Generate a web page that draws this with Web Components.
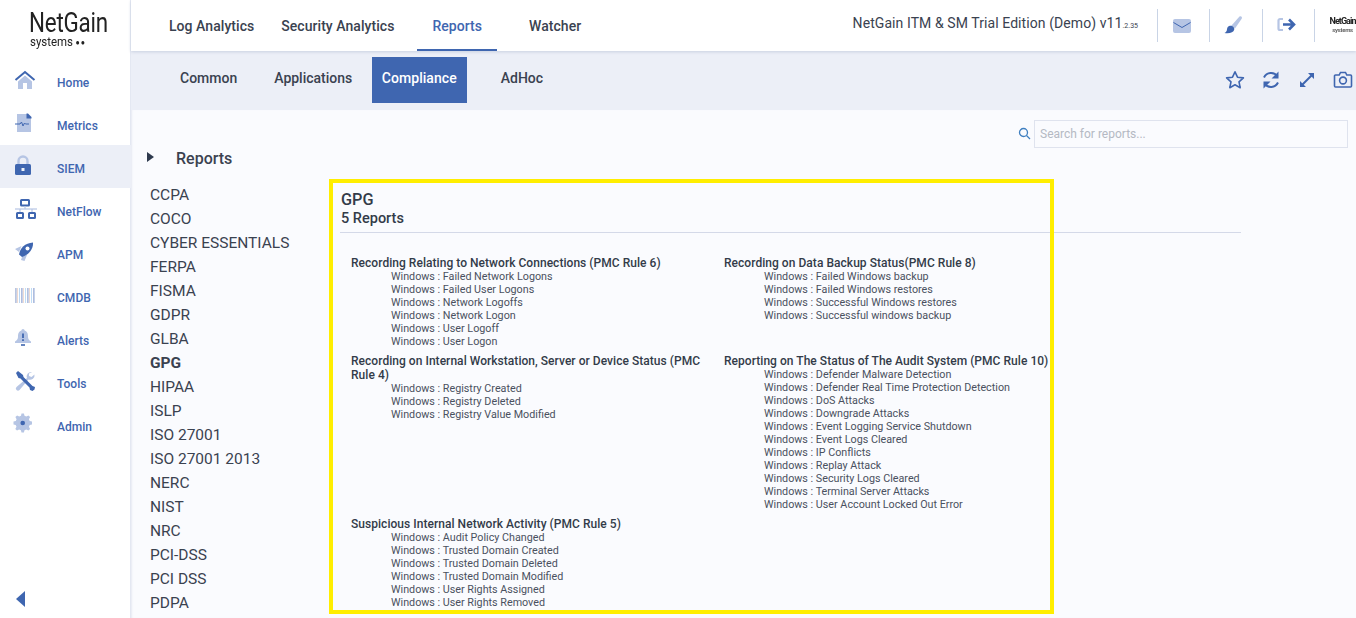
<!DOCTYPE html>
<html><head><meta charset="utf-8"><title>NetGain</title>
<style>
html,body{margin:0;padding:0;height:618px;overflow:hidden;background:#fff;font-family:Roboto,"Liberation Sans",sans-serif;}
</style></head><body>
<ng-app></ng-app>
<script>
const D='#3f66b0',L='#b6c5e4';
const ICONS={
home:`<path d="M5 13.5 12 7.5l7 6V21h-5v-6h-4v6H5z" fill="${L}"/><path d="M2.5 12 12 4l9.5 8" fill="none" stroke="${D}" stroke-width="2"/>`,
metrics:`<path d="M4 3h10l4 4v14H4z" fill="${L}"/><path d="M13.5 2.5h1.5l3.5 3.5v1.5h-5z" fill="${D}"/><path d="M2 13h5l1.5-2 1.5 4 1.5-3 1 1H16" fill="none" stroke="${D}" stroke-width="1"/>`,
lock:`<path d="M5.5 11V7a4.5 4.5 0 0 1 9 0v4" fill="none" stroke="${L}" stroke-width="2.4"/><rect x="2" y="10" width="16" height="11" rx="1.5" fill="${D}"/><rect x="8.5" y="14" width="3" height="3" fill="#eef1f8"/>`,
flow:`<g fill="none" stroke="${D}" stroke-width="2"><rect x="8" y="3" width="8" height="5.5" rx=".5"/><rect x="4" y="16" width="6" height="5" rx=".5"/><rect x="16" y="16" width="6" height="5" rx=".5"/></g><path d="M2 12h22" stroke="${L}" stroke-width="1.2"/><path d="M12 9v3M7 12v3M19 12v3" stroke="${L}" stroke-width="1.2"/>`,
rocket:`<path d="M2 9l6.500-3-2.500 6zM8 20l2-6 4 1-2.500 6z" fill="${L}"/><path d="M6 14.500C7 8 12 3 20 2.500c.5 7-5 12.500-11 14.500z" fill="${D}"/><circle cx="14.500" cy="8.500" r="2" fill="#fff"/>`,
barcode:`<g stroke-width="1">${[2,4,6,8,10,12,14,16,18,20].map((x,i)=>`<path d="M${x+.5} 5v15" stroke="${['#b9c5e0','#eed9cf','#bcd8f4','#aebce0','#efdcd4','#c1ddf6','#b2c0df','#ecd8d0','#bfdcf5','#aebde0'][i]}"/>`).join('')}<path d="M3.500 5v15M9.500 5v15M15.500 5v15M21.500 5v15" stroke="#c8d2e8"/></g>`,
bell:`<path d="M10 3a1.6 1.6 0 0 1 1.6 1.6C14.5 5.5 15 8 15 11c0 2 1.500 3.500 3 4.500V17H2v-1.500C3.500 14.500 5 13 5 11c0-3 .5-5.500 3.400-6.400A1.600 1.600 0 0 1 10 3z" fill="${L}"/><path d="M10 7.500v4.500M10 13.200v1.800" stroke="${D}" stroke-width="1.800"/><path d="M8 19h4" stroke="${D}" stroke-width="1.600"/>`,
tools:`<path d="M19 3a4.500 4.500 0 0 0-5 6L3.500 18a2 2 0 0 0 3 3L15.500 10.500a4.500 4.500 0 0 0 6-5l-3 2.500-2.500-1 0-2.500z" fill="${L}"/><path d="M3 4l2-2 5 4 .5 2 9 9 2.500 1-.5 2.500-2 1.500-2.500-1-.5-2.500-9-9-2-.5z" fill="${D}"/>`,
gear:`<path d="M11 3h2.400l.6 2.300 1.800.8 2.100-1.200 1.700 1.700-1.200 2.100.8 1.800 2.300.6v2.800l-2.300.6-.8 1.800 1.200 2.100-1.700 1.700-2.100-1.200-1.800.8-.6 2.300H11l-.6-2.300-1.800-.8-2.100 1.200-1.700-1.700 1.200-2.100-.8-1.800L3 13.900v-2.800l2.300-.6.800-1.800-1.200-2.100 1.700-1.700 2.100 1.200 1.800-.8z" fill="${L}" transform="translate(-2.500 -1.500)"/><circle cx="9.700" cy="11" r="2.300" fill="${D}"/>`,
mail:`<rect x="2" y="4" width="18" height="14" rx="2" fill="${L}"/><path d="M2.500 7.500 11 12.500l8.500-5" fill="none" stroke="${D}" stroke-width="1"/>`,
brush:`<path d="M16.500 1.500c1.800-.8 3 .7 2.200 2.200l-6.700 9.800-3.500-3z" fill="${L}"/><path d="M6.800 10.800c2.300-.6 5 1.200 4.400 3.900-.6 2.800-4.700 4.100-9.700 3.300 2-1 2.300-2.200 2.500-3.800.2-1.500 1-3 2.800-3.400z" fill="${D}"/>`,
exit:`<path d="M7 4H4a1.500 1.500 0 0 0-1.500 1.500v8A1.500 1.500 0 0 0 4 15h3" fill="none" stroke="${L}" stroke-width="2.200"/><path d="M7 9.500h11M13 4.500l5 5-5 5" fill="none" stroke="${D}" stroke-width="2.600"/>`,
star:`<path d="M10 1.800l2.500 5.400 5.900.7-4.400 4 1.200 5.800L10 14.800l-5.200 2.900L6 11.900l-4.400-4 5.900-.7z" fill="none" stroke="${D}" stroke-width="1.600" stroke-linejoin="round"/>`,
sync:`<path d="M16.500 6.500A7.800 7.800 0 0 0 3 7.500M3.500 13.500A7.800 7.800 0 0 0 17 12.500" fill="none" stroke="${D}" stroke-width="2"/><path d="M17.500 1.500v7h-7zM2.500 18.500v-7h7z" fill="${D}"/>`,
expand:`<path d="M5 15 15 5" stroke="${D}" stroke-width="2"/><path d="M11 3h6v6zM3 11v6h6z" fill="${D}"/>`,
camera:`<path d="M1.500 6a1 1 0 0 1 1-1h3.700l1.300-2.500h5L13.800 5h3.700a1 1 0 0 1 1 1v10a1 1 0 0 1-1 1h-15a1 1 0 0 1-1-1z" fill="none" stroke="${D}" stroke-width="1.600"/><circle cx="10" cy="10.500" r="3.400" fill="none" stroke="${D}" stroke-width="1.600"/>`
};
function def(name,css,html){
  customElements.define(name,class extends HTMLElement{
    connectedCallback(){
      if(this.shadowRoot)return;
      const r=this.attachShadow({mode:'open'});
      r.innerHTML=`<style>${css}</style>`+(typeof html==='function'?html(this):html);
    }
  });
}
def('ng-icon',`:host{display:block;line-height:0}svg{display:block}`,e=>{
  const s=e.getAttribute('size')||24;
  return `<svg width="${s}" height="${s}" viewBox="0 0 ${s} ${s}">${ICONS[e.getAttribute('name')]}</svg>`;
});
def('ng-logo',`:host{display:block;height:59px;color:#222}
.w{display:block;font-size:28px;line-height:26px;padding:10px 0 0 29px;transform:scaleX(.8);transform-origin:29px 0;white-space:nowrap;letter-spacing:-.3px}
.s{display:block;font-size:13px;line-height:12px;padding-left:30px;transform:scaleX(.88);transform-origin:30px 0;white-space:nowrap}
.s i{font-style:normal;font-size:8px;letter-spacing:1px;margin-left:3px;vertical-align:1px}`,
`<span class="w">NetGain</span><span class="s">systems<i>●●</i></span>`);
def('ng-nav-item',`:host{display:block;height:43px}
.r{display:flex;align-items:center;height:43px;padding-left:13px;box-sizing:border-box}
:host([active]) .r{background:#eceff7}
ng-icon{width:24px;margin-top:-2px}
span{margin-left:20px;font:500 12px Roboto,sans-serif;letter-spacing:.03px;color:#3f66b0;padding-top:5px}`,
e=>`<div class="r"><ng-icon name="${e.getAttribute('icon')}"></ng-icon><span><slot></slot></span></div>`);
def('ng-sidebar',`:host{display:flex;flex-direction:column;width:131px;flex:none;height:618px;background:#fff;box-shadow:inset -1px 0 0 #e4e8f2;box-sizing:border-box}
.grow{flex:1}
.t{width:0;height:0;border-style:solid;border-width:8px 9px 8px 0;border-color:transparent #3f66b0 transparent transparent;margin:0 0 11px 16px}`,
`<slot></slot><div class="grow"></div><div class="t"></div>`);
def('ng-top-tab',`:host{display:flex;align-items:center;height:51px;box-sizing:border-box;font:500 14px Roboto,sans-serif;letter-spacing:.05px;color:#3a4250;padding:2px 13.500px 0;border-bottom:2px solid transparent}
:host([active]){color:#3f66b0;border-bottom-color:#3f66b0;padding:2px 15px 0}`,`<slot></slot>`);
def('ng-topbar',`:host{display:flex;height:51px;flex:none;background:#fff;box-shadow:0 1px 3px #c9d0e0;position:relative;z-index:1;align-items:center;box-sizing:border-box;padding-left:24.500px}
.title{margin-left:auto;font:400 14px Roboto,sans-serif;color:#3a4250;letter-spacing:.08px;margin-right:19px;white-space:nowrap;margin-top:-6px}
small{font-size:7px;letter-spacing:0}
.b{width:52px;height:33px;margin-top:-1px;border-left:1px solid #c9d4e6;display:flex;align-items:center;justify-content:center;box-sizing:border-box;flex:none;padding-right:5px}
.b.m{width:53px;padding-right:6px}
.a{font:700 9px Roboto,sans-serif;color:#222;filter:blur(.55px);letter-spacing:-.95px;line-height:9px;text-align:center}
.a u{display:block;text-decoration:none;font-size:6px;line-height:7px;letter-spacing:-.3px;color:#666}`,
`<slot></slot><span class="title">NetGain ITM &amp; SM Trial Edition (Demo) v11<small>.2.35</small></span>
<div class="b"><ng-icon name="mail" size="20"></ng-icon></div><div class="b m"><ng-icon name="brush" size="20"></ng-icon></div><div class="b"><ng-icon name="exit" size="20"></ng-icon></div><div class="b" style="width:42px;padding:0 0 0 14px"><div class="a">NetGain<u>systems</u></div></div>`);
def('ng-sub-tab',`:host{display:flex;align-items:center;justify-content:center;height:46px;font:500 14px Roboto,sans-serif;color:#3a4250;box-sizing:border-box;padding:0 18px 5px;margin-top:-1px}
:host([active]){background:#3f66b0;color:#fff;letter-spacing:.05px;padding:0 10px 5px;margin:-1px 16px 0 1.500px}`,`<slot></slot>`);
def('ng-subnav',`:host{display:flex;height:59px;flex:none;background:#eceff7;align-items:center;box-sizing:border-box;padding-left:31px}
.tools{margin-left:auto;display:flex;gap:16px;margin-right:3px;margin-top:-1px}`,
`<slot></slot><div class="tools"><ng-icon name="star" size="20"></ng-icon><ng-icon name="sync" size="20"></ng-icon><ng-icon name="expand" size="20"></ng-icon><ng-icon name="camera" size="20"></ng-icon></div>`);
def('ng-search',`:host{display:flex;align-items:center;justify-content:flex-end;height:28px;flex:none}
svg{margin-right:3px;margin-top:-1px}
input{width:314px;height:28px;box-sizing:border-box;border:1px solid #dfe3ee;background:#fafbfe;padding:0 5px;font:12px Roboto,sans-serif;outline:0}
input::placeholder{color:#b4b9c3}`,
`<svg width="13" height="13" viewBox="0 0 13 13"><circle cx="5.500" cy="5.500" r="4" fill="none" stroke="#3f7fc0" stroke-width="1.300"/><path d="M8.500 8.500l3.500 3.500" stroke="#3f7fc0" stroke-width="1.300"/></svg><input placeholder="Search for reports...">`);
def('ng-report-list',`:host{display:block;width:179px;flex:none;color:#3a4250;padding-left:16px;box-sizing:border-box}
.h{display:flex;align-items:center;height:20px;font:500 16px Roboto,sans-serif;color:#3a4250;margin-top:-12px}
.t{width:0;height:0;border-style:solid;border-width:5.500px 0 5.500px 7px;border-color:transparent transparent transparent #2e3a4e;margin:-3px 22px 0 0}
.l{margin-top:15px;margin-left:3px}`,
`<div class="h"><span class="t"></span>Reports</div><div class="l"><slot></slot></div>`);
def('ng-report-link',`:host{display:block;height:24px;font:400 15.500px/24px Roboto,sans-serif;color:#3a4250;white-space:nowrap}
:host([active]){font-weight:700}`,`<slot></slot>`);
def('ng-report-group',`:host{display:block;font:400 10.750px/13px Roboto,sans-serif;color:#4a5160;width:360px}
h4{margin:-1px 0 0;font:500 12px/14px Roboto,sans-serif;letter-spacing:.04px;color:#333b49}
.i{padding-left:40px}
::slotted(div){white-space:nowrap}`,
e=>`<h4>${e.getAttribute('title')}</h4><div class="i"><slot></slot></div>`);
def('ng-report-panel',`:host{display:block;position:relative;flex:1;min-width:0;padding:11px 0 0 11px;margin-top:19px}
.o{position:absolute;left:0;top:0;width:725px;height:435px;box-sizing:border-box;border:4px solid #ffee00;pointer-events:none}
h2{margin:0;padding-left:1px;font:500 16.250px/20px Roboto,sans-serif;color:#333b49}
h3{margin:0;padding-left:1px;font:500 14.500px/17px Roboto,sans-serif;color:#333b49}
.head{width:901px;padding-bottom:5px;border-bottom:1px solid #d4d9e8;margin-bottom:24px}
.g{display:grid;grid-template-columns:373px 373px;padding-left:11px;row-gap:7px}`,
`<div class="head"><h2><slot name="t"></slot></h2><h3><slot name="s"></slot></h3></div><div class="g"><slot></slot></div><div class="o"></div>`);
def('ng-app',`:host{display:flex;height:618px;width:1356px;overflow:hidden}
.m{flex:1;min-width:0;display:flex;flex-direction:column}
.c{flex:1;background:#fafbfe;padding:10px 8px 0 0;min-height:0;overflow:hidden;box-shadow:inset 2px 0 2px -1px #e7eaf3}
.row{display:flex;margin-top:12px}`,
()=>{
 const nav=[['home','Home'],['metrics','Metrics'],['lock','SIEM',1],['flow','NetFlow'],['rocket','APM'],['barcode','CMDB'],['bell','Alerts'],['tools','Tools'],['gear','Admin']];
 const list=['CCPA','COCO','CYBER ESSENTIALS','FERPA','FISMA','GDPR','GLBA','GPG','HIPAA','ISLP','ISO 27001','ISO 27001 2013','NERC','NIST','NRC','PCI-DSS','PCI DSS','PDPA'];
 const groups=[
 ['Recording Relating to Network Connections (PMC Rule 6)',['Failed Network Logons','Failed User Logons','Network Logoffs','Network Logon','User Logoff','User Logon']],
 ['Recording on Data Backup Status(PMC Rule 8)',['Failed Windows backup','Failed Windows restores','Successful Windows restores','Successful windows backup']],
 ['Recording on Internal Workstation, Server or Device Status (PMC Rule 4)',['Registry Created','Registry Deleted','Registry Value Modified']],
 ['Reporting on The Status of The Audit System (PMC Rule 10)',['Defender Malware Detection','Defender Real Time Protection Detection','DoS Attacks','Downgrade Attacks','Event Logging Service Shutdown','Event Logs Cleared','IP Conflicts','Replay Attack','Security Logs Cleared','Terminal Server Attacks','User Account Locked Out Error']],
 ['Suspicious Internal Network Activity (PMC Rule 5)',['Audit Policy Changed','Trusted Domain Created','Trusted Domain Deleted','Trusted Domain Modified','User Rights Assigned','User Rights Removed']]];
 return `<ng-sidebar><ng-logo></ng-logo>${nav.map(n=>`<ng-nav-item icon="${n[0]}"${n[2]?' active':''}>${n[1]}</ng-nav-item>`).join('')}</ng-sidebar>
 <div class="m"><ng-topbar><ng-top-tab>Log Analytics</ng-top-tab><ng-top-tab>Security Analytics</ng-top-tab><ng-top-tab active style="margin-left:9.500px">Reports</ng-top-tab><ng-top-tab style="margin-left:18.500px">Watcher</ng-top-tab></ng-topbar>
 <ng-subnav><ng-sub-tab>Common</ng-sub-tab><ng-sub-tab style="margin-left:1px">Applications</ng-sub-tab><ng-sub-tab active>Compliance</ng-sub-tab><ng-sub-tab>AdHoc</ng-sub-tab></ng-subnav>
 <div class="c"><ng-search></ng-search><div class="row"><ng-report-list>${list.map(x=>`<ng-report-link${x==='GPG'?' active':''}>${x}</ng-report-link>`).join('')}</ng-report-list>
 <div style="width:19px;flex:none"></div><ng-report-panel><span slot="t">GPG</span><span slot="s">5 Reports</span>${groups.map(g=>`<ng-report-group title="${g[0]}">${g[1].map(i=>`<div>Windows : ${i}</div>`).join('')}</ng-report-group>`).join('')}</ng-report-panel></div></div></div>`;
});
</script>
</body></html>
